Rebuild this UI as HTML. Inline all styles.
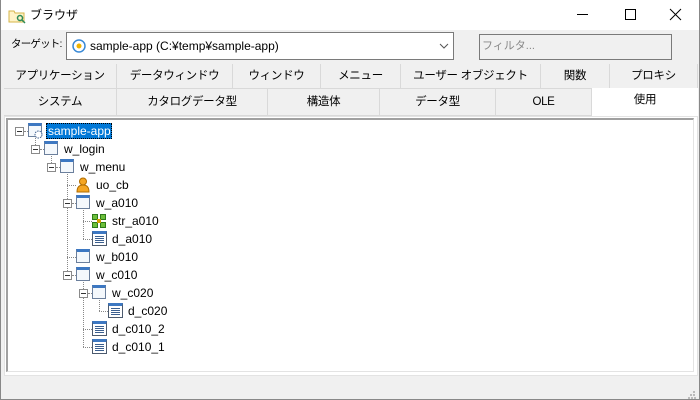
<!DOCTYPE html><html><head><meta charset="utf-8"><style>
*{margin:0;padding:0;box-sizing:border-box}
body{width:700px;height:400px;overflow:hidden;background:#f0f0f0;font-family:"Liberation Sans","Noto Sans CJK JP",sans-serif;font-size:12px;color:#000;position:relative}
.a{position:absolute}
.win{left:0;top:0;width:700px;height:400px;border:1px solid #888;border-top:none}
.title{left:1px;top:0;width:698px;height:30px;background:#fff}
.tab{position:absolute;height:25px;border-right:1px solid #d9d9d9;border-bottom:1px solid #d9d9d9;text-align:center;line-height:24px;font-size:11.5px;letter-spacing:-0.3px}
.ti{position:absolute;font-size:12px;line-height:14px;white-space:nowrap}
.dv{position:absolute;border-left:1px dotted #888;width:0}
.dh{position:absolute;border-top:1px dotted #888;height:0}
.box{position:absolute;width:9px;height:9px;border:1px solid #8a8a8a;background:#fff}
.box:after{content:"";position:absolute;left:1px;top:3px;width:5px;height:1px;background:#333}
.wi{position:absolute;width:14px;height:14px;border:1px solid #6b7f9c;border-top:3px solid #3d78c2;background:#f4f8fc}
.di{position:absolute;width:15px;height:15px;border:1px solid #4c5a6e;border-top:3px solid #3d78c2;background:#fff}
.di:after{content:"";position:absolute;left:2px;top:2px;width:9px;height:7px;background:repeating-linear-gradient(#3b5f8f 0 1px,transparent 1px 2px)}
</style></head><body>
<div class="a title"></div>
<div class="a win"></div>
<svg class="a" style="left:8px;top:8px" width="18" height="16"><path d="M1 3h5l1 2h9v9H1z" fill="#fff3c8" stroke="#d6b44a"/><circle cx="12" cy="10" r="2.5" fill="none" stroke="#2e8b57" stroke-width="1.5"/><path d="M14 12l3 3" stroke="#2e8b57" stroke-width="1.5"/></svg>
<div class="ti" style="left:30px;top:8px">ブラウザ</div>
<div class="a" style="left:577px;top:14px;width:11px;height:1px;background:#000"></div>
<div class="a" style="left:625px;top:9px;width:11px;height:11px;border:1px solid #000"></div>
<svg class="a" style="left:669px;top:8px" width="13" height="13"><path d="M1 1l11 11M12 1L1 12" stroke="#000"/></svg>
<div class="ti" style="left:11px;top:37px;font-size:10.5px;letter-spacing:-0.8px">ターゲット:</div>
<div class="a" style="left:66px;top:32px;width:388px;height:28px;background:#fff;border:1px solid #7a7a7a"></div>
<svg class="a" style="left:72px;top:39px" width="14" height="14"><circle cx="7" cy="7" r="6" fill="#fff" stroke="#3a8ad6" stroke-width="1.5"/><circle cx="7" cy="7" r="2.5" fill="#f0b400"/></svg>
<div class="ti" style="left:90px;top:39px">sample-app (C:¥temp¥sample-app)</div>
<svg class="a" style="left:439px;top:43px" width="10" height="6"><path d="M1 1l4 4 4-4" fill="none" stroke="#555"/></svg>
<div class="a" style="left:479px;top:34px;width:193px;height:26px;background:#f0f0f0;border:1px solid #7a7a7a"></div>
<div class="ti" style="left:482px;top:39px;color:#888;font-size:11px">フィルタ...</div>
<div class="tab" style="left:4px;top:64px;width:113px">アプリケーション</div>
<div class="tab" style="left:117px;top:64px;width:116px">データウィンドウ</div>
<div class="tab" style="left:233px;top:64px;width:88px">ウィンドウ</div>
<div class="tab" style="left:321px;top:64px;width:80px">メニュー</div>
<div class="tab" style="left:401px;top:64px;width:140px">ユーザー オブジェクト</div>
<div class="tab" style="left:541px;top:64px;width:69px">関数</div>
<div class="tab" style="left:610px;top:64px;width:88px">プロキシ</div>
<div class="tab" style="left:4px;top:89px;width:113px;height:27px;line-height:26px">システム</div>
<div class="tab" style="left:117px;top:89px;width:151px;height:27px;line-height:26px">カタログデータ型</div>
<div class="tab" style="left:268px;top:89px;width:112px;height:27px;line-height:26px">構造体</div>
<div class="tab" style="left:380px;top:89px;width:116px;height:27px;line-height:26px">データ型</div>
<div class="tab" style="left:496px;top:89px;width:96px;height:27px;line-height:26px">OLE</div>
<div class="tab" style="left:592px;top:88px;width:106px;height:30px;background:#fff;border:none;line-height:24px">使用</div>
<div class="a" style="left:4px;top:116px;width:694px;height:260px;background:#fff;border:1px solid #e3e3e3"></div>
<div class="a" style="left:6px;top:118px;width:688px;height:254px;background:#fff;border-top:2px solid #a0a0a0;border-left:2px solid #a0a0a0;border-right:1px solid #e3e3e3;border-bottom:1px solid #e3e3e3"></div>
<svg class="a" style="left:688px;top:391px" width="8" height="8"><g fill="#bbb"><rect x="5" y="0" width="2" height="2"/><rect x="2" y="3" width="2" height="2"/><rect x="5" y="3" width="2" height="2"/><rect x="0" y="6" width="2" height="2"/><rect x="3" y="6" width="2" height="2"/><rect x="6" y="6" width="2" height="2"/></g></svg>
<div class="dv" style="left:35px;top:136px;height:13px"></div>
<div class="dv" style="left:51px;top:154px;height:13px"></div>
<div class="dv" style="left:67px;top:172px;height:103px"></div>
<div class="dv" style="left:83px;top:208px;height:31px"></div>
<div class="dv" style="left:83px;top:280px;height:67px"></div>
<div class="dv" style="left:99px;top:298px;height:13px"></div>
<div class="dh" style="left:24px;top:131px;width:4px"></div>
<div class="dh" style="left:40px;top:149px;width:4px"></div>
<div class="dh" style="left:56px;top:167px;width:4px"></div>
<div class="dh" style="left:67px;top:185px;width:9px"></div>
<div class="dh" style="left:72px;top:203px;width:4px"></div>
<div class="dh" style="left:83px;top:221px;width:9px"></div>
<div class="dh" style="left:83px;top:239px;width:9px"></div>
<div class="dh" style="left:67px;top:257px;width:9px"></div>
<div class="dh" style="left:72px;top:275px;width:4px"></div>
<div class="dh" style="left:88px;top:293px;width:4px"></div>
<div class="dh" style="left:99px;top:311px;width:9px"></div>
<div class="dh" style="left:83px;top:329px;width:9px"></div>
<div class="dh" style="left:83px;top:347px;width:9px"></div>
<div class="box" style="left:15px;top:127px"></div>
<div class="box" style="left:31px;top:145px"></div>
<div class="box" style="left:47px;top:163px"></div>
<div class="box" style="left:63px;top:199px"></div>
<div class="box" style="left:63px;top:271px"></div>
<div class="box" style="left:79px;top:289px"></div>
<div class="wi" style="left:28px;top:123px"></div>
<svg class="a" style="left:34px;top:130px" width="9" height="9"><circle cx="4.5" cy="4.5" r="3.5" fill="#fff" stroke="#3d5f8f" stroke-dasharray="1.5 1"/></svg>
<div class="wi" style="left:44px;top:141px"></div>
<div class="wi" style="left:60px;top:159px"></div>
<svg class="a" style="left:76px;top:177px" width="14" height="16"><circle cx="7" cy="4.5" r="3.5" fill="#f5a623" stroke="#b06d00"/><path d="M1 15c0-5 2.5-7 6-7s6 2 6 7z" fill="#f5a623" stroke="#b06d00"/></svg>
<div class="wi" style="left:76px;top:195px"></div>
<svg class="a" style="left:92px;top:214px" width="14" height="14"><g fill="#6cbf3a" stroke="#2d7a1a"><rect x="0.5" y="0.5" width="5" height="5"/><rect x="8.5" y="0.5" width="5" height="5"/><rect x="0.5" y="8.5" width="5" height="5"/><rect x="8.5" y="8.5" width="5" height="5"/></g><rect x="5" y="5" width="4" height="4" fill="#d4a000"/></svg>
<div class="di" style="left:92px;top:231px"></div>
<div class="wi" style="left:76px;top:249px"></div>
<div class="wi" style="left:76px;top:267px"></div>
<div class="wi" style="left:92px;top:285px"></div>
<div class="di" style="left:108px;top:303px"></div>
<div class="di" style="left:92px;top:321px"></div>
<div class="di" style="left:92px;top:339px"></div>
<div class="a" style="left:46px;top:123px;width:66px;height:16px;background:#0078d7;border:1px dotted #000"></div>
<div class="ti" style="left:48px;top:124px;color:#fff">sample-app</div>
<div class="ti" style="left:64px;top:142px">w_login</div>
<div class="ti" style="left:80px;top:160px">w_menu</div>
<div class="ti" style="left:96px;top:178px">uo_cb</div>
<div class="ti" style="left:96px;top:196px">w_a010</div>
<div class="ti" style="left:112px;top:214px">str_a010</div>
<div class="ti" style="left:112px;top:232px">d_a010</div>
<div class="ti" style="left:96px;top:250px">w_b010</div>
<div class="ti" style="left:96px;top:268px">w_c010</div>
<div class="ti" style="left:112px;top:286px">w_c020</div>
<div class="ti" style="left:128px;top:304px">d_c020</div>
<div class="ti" style="left:112px;top:322px">d_c010_2</div>
<div class="ti" style="left:112px;top:340px">d_c010_1</div>
</body></html>
